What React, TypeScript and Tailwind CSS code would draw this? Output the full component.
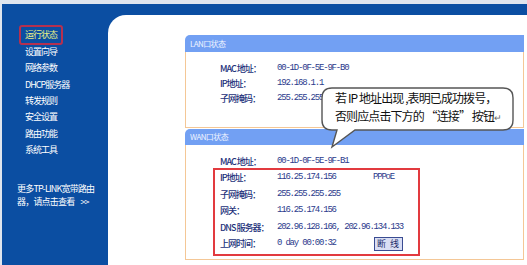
const menu = ["运行状态", "设置向导", "网络参数", "DHCP服务器", "转发规则", "安全设置", "路由功能", "系统工具"];

const cjk = "font-['Noto_Sans_CJK_SC',sans-serif]";
const mono = "font-['Liberation_Mono',monospace] text-[9px] tracking-[-1.2px] text-[#2b3a8c]";

function Sidebar() {
  return (
    <div className={`w-[106px] shrink-0 ${cjk}`}>
      <div className="flex flex-col pl-[23px] pt-[12px]">
        {menu.map((m, i) => (
          <div key={m} className="relative flex h-[16.4px] items-center">
            <span
              className={`text-[9px] tracking-[-1px] ${
                i === 0 ? "text-[#e6ef86]" : "text-white"
              }`}
            >
              {m}
            </span>
            {i === 0 && (
              <span className="absolute -left-[6px] -top-[2px] h-[20px] w-[44px] rounded-[3px] border-2 border-[#b5304f]" />
            )}
          </div>
        ))}
      </div>
      <div className="mt-[25px] pl-[15px] text-[9px] leading-[12.5px] tracking-[-0.8px] text-white">
        <div>更多TP-LINK宽带路由</div>
        <div>
          器，请点击查看<span className="pl-[6px]">&gt;&gt;</span>
        </div>
      </div>
    </div>
  );
}

function Label({ children }: { children: React.ReactNode }) {
  return (
    <span className={`w-[57px] shrink-0 text-[9px] font-medium tracking-[-1px] text-[#22307a] ${cjk}`}>
      {children}
    </span>
  );
}

function Header({ title, h }: { title: string; h: string }) {
  return (
    <div
      className={`flex ${h} items-center rounded-tl-[5px] bg-[#72a0f3] pl-[5px] text-[8px] tracking-[-0.6px] text-[#eef3ff] ${cjk}`}
    >
      {title}
    </div>
  );
}

function Row({ label, value, h = "h-[15px]" }: { label: string; value: string; h?: string }) {
  return (
    <div className={`flex ${h} items-center whitespace-nowrap`}>
      <Label>{label}</Label>
      <span className={mono}>{value}</span>
    </div>
  );
}

function Callout() {
  return (
    <div className="absolute left-[320px] top-[86px] h-[64px] w-[196px]">
      <svg width="196" height="64" viewBox="0 0 196 64" className="absolute inset-0">
        <path
          d="M12 2 H183 Q193 2 193 12 V34 Q193 44 183 44 H35 L12 61 L17 44 H12 Q2 44 2 34 V12 Q2 2 12 2 Z"
          fill="#ffffff"
          stroke="#555555"
          strokeWidth="1.4"
        />
      </svg>
      <div
        className={`relative pl-[15px] pt-[3px] text-[12px] leading-[18px] tracking-[-0.9px] text-[#111] ${cjk}`}
      >
        <div>若 IP 地址出现 ,表明已成功拨号，</div>
        <div>
          否则应点击下方的 “连接” 按钮<span className="text-[9px] text-[#666]">↵</span>
        </div>
      </div>
    </div>
  );
}

export default function App() {
  return (
    <div className="relative h-[265px] w-[527px] overflow-hidden bg-[#dfe5ee] pl-[2px] pt-[4px]">
      <div className="flex h-full flex-col bg-[#0b4ea2]">
        <div className="h-[11px] shrink-0" />
        <div className="flex flex-1">
          <Sidebar />
          <div className="flex-1 rounded-tl-[18px] bg-white pl-[77px] pr-[3px] pt-[20px]">
            {/* LAN */}
            <div>
              <Header title="LAN口状态" h="h-[17px]" />
              <div className="h-[76px] border-x border-b border-[#f4c796] pl-[34px] pt-[9px]">
                <Row label="MAC 地址：" value="00-1D-0F-5E-9F-B0" />
                <Row label="IP地址：" value="192.168.1.1" />
                <Row label="子网掩码：" value="255.255.255.255" />
              </div>
            </div>
            {/* WAN */}
            <div className="mt-[1px]">
              <Header title="WAN口状态" h="h-[16px]" />
              <div className="border-x border-b border-[#f4c796] pb-[3px] pt-[10px]">
                <div className="pl-[34px]">
                  <Row label="MAC 地址：" value="00-1D-0F-5E-9F-B1" h="h-[13px]" />
                </div>
                <div className="ml-[27px] w-[207px] border-2 border-[#e23a3f] pb-[2px] pl-[5px]">
                  <div className="flex h-[16.4px] items-center whitespace-nowrap">
                    <Label>IP地址：</Label>
                    <span className={`w-[96px] ${mono}`}>116.25.174.156</span>
                    <span className={mono}>PPPoE</span>
                  </div>
                  <Row label="子网掩码：" value="255.255.255.255" h="h-[16.4px]" />
                  <Row label="网关：" value="116.25.174.156" h="h-[16.4px]" />
                  <Row label="DNS 服务器：" value="202.96.128.166, 202.96.134.133" h="h-[16.4px]" />
                  <div className="flex h-[16.4px] items-center whitespace-nowrap">
                    <Label>上网时间：</Label>
                    <span className={`w-[97px] ${mono}`}>0 day 00:00:32</span>
                    <button
                      className={`flex h-[14px] w-[29px] items-center justify-center border border-[#3a4c92] bg-[#d9def4] text-[9px] tracking-[1px] text-[#1c2a6a] ${cjk}`}
                    >
                      断 线
                    </button>
                  </div>
                </div>
              </div>
            </div>
          </div>
        </div>
      </div>
      <Callout />
    </div>
  );
}
